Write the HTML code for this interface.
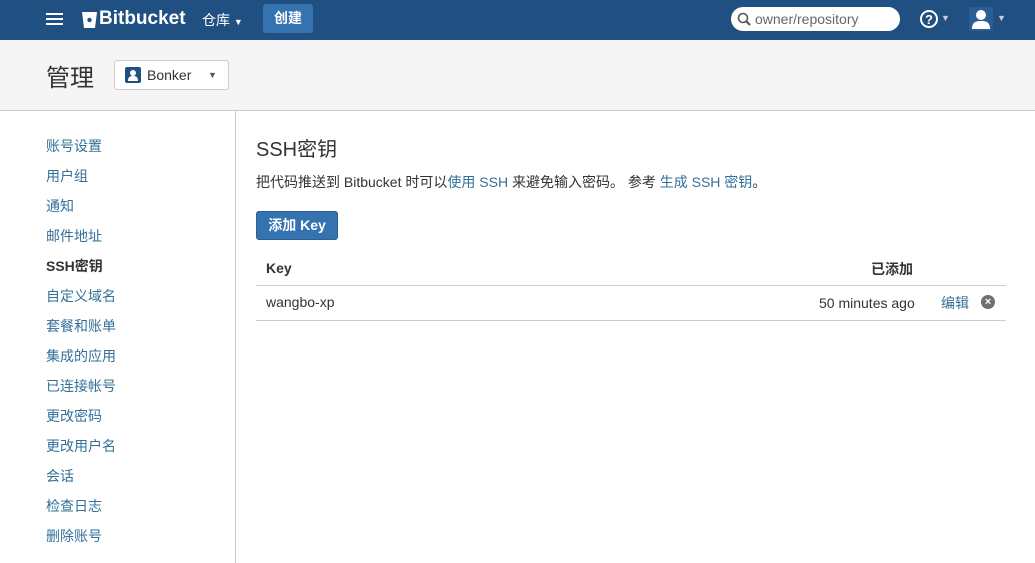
<!DOCTYPE html>
<html><head><meta charset="utf-8"><style>
*{margin:0;padding:0;box-sizing:border-box}
body{width:1035px;height:563px;overflow:hidden;background:#fff;font-family:"Liberation Sans","Noto Sans CJK SC",sans-serif;font-size:14px;color:#333;position:relative}
.top{position:absolute;left:0;top:0;width:1035px;height:40px;background:#205081}
.a{position:absolute}
.hdr{position:absolute;left:0;top:40px;width:1035px;height:71px;background:#f5f5f5;border-bottom:1px solid #ccc}
.side{position:absolute;left:0;top:111px;width:236px;height:452px;border-right:1px solid #ccc}
.side div{position:absolute;left:46px;font-size:14px;color:#32709a}
a{color:#32709a;text-decoration:none}
</style></head><body>
<div class="top">
 <div class="a" style="left:46px;top:13px;width:17px;height:2px;background:#fff;box-shadow:0 5px 0 #fff,0 10px 0 #fff"></div>
 <svg class="a" style="left:82px;top:11px" width="15" height="18" viewBox="0 0 15 18"><path d="M0 1h15l-2 16H2z" fill="#fff"/><circle cx="7.5" cy="9" r="2.2" fill="#205081"/></svg>
 <div class="a" style="left:99px;top:8px;color:#fff;font-weight:bold;font-size:19px">Bitbucket</div>
 <div class="a" style="left:202px;top:10px;color:#fff;font-size:14px">仓库 <span style="font-size:9px">▼</span></div>
 <div class="a" style="left:263px;top:4px;width:50px;height:29px;background:#3572b0;border-radius:3px;color:#fff;font-weight:bold;font-size:14px;text-align:center;line-height:28px">创建</div>
 <div class="a" style="left:731px;top:7px;width:169px;height:24px;background:#fff;border-radius:12px;color:#666;font-size:14px;padding-left:24px;line-height:24px">owner/repository</div>
 <svg class="a" style="left:737px;top:12px" width="14" height="14"><circle cx="6" cy="6" r="4.5" stroke="#555" stroke-width="1.6" fill="none"/><path d="M9 9l4 4" stroke="#555" stroke-width="2"/></svg>
 <div class="a" style="left:920px;top:10px;width:18px;height:18px;border:2px solid #fff;border-radius:50%;color:#fff;font-weight:bold;font-size:13px;text-align:center;line-height:15px">?</div>
 <div class="a" style="left:941px;top:13px;color:#ccd;font-size:9px">▼</div>
 <div class="a" style="left:969px;top:7px;width:24px;height:24px;background:#2a5d93"></div>
 <svg class="a" style="left:971px;top:9px" width="20" height="20"><circle cx="10" cy="6" r="5" fill="#fff"/><path d="M1 20c0-7 4-8 9-8s9 1 9 8z" fill="#fff"/></svg>
 <div class="a" style="left:997px;top:13px;color:#ccd;font-size:9px">▼</div>
</div>
<div class="hdr">
 <div class="a" style="left:46px;top:18px;font-size:24px;color:#333">管理</div>
 <div class="a" style="left:114px;top:20px;width:115px;height:30px;background:#fff;border:1px solid #ccc;border-radius:3px"></div>
 <div class="a" style="left:125px;top:27px;width:16px;height:16px;background:#205081;border-radius:2px"></div>
 <svg class="a" style="left:127px;top:29px" width="12" height="12"><circle cx="6" cy="4" r="3" fill="#fff"/><path d="M1 12c0-4 2-5 5-5s5 1 5 5z" fill="#fff"/></svg>
 <div class="a" style="left:147px;top:27px;font-size:14px;color:#333">Bonker</div>
 <div class="a" style="left:208px;top:30px;font-size:9px;color:#555">▼</div>
</div>
<div class="side">
 <div style="top:25px">账号设置</div><div style="top:55px">用户组</div><div style="top:85px">通知</div><div style="top:115px">邮件地址</div>
 <div style="top:145px;color:#333;font-weight:bold">SSH密钥</div>
 <div style="top:175px">自定义域名</div><div style="top:205px">套餐和账单</div><div style="top:235px">集成的应用</div><div style="top:265px">已连接帐号</div><div style="top:295px">更改密码</div><div style="top:325px">更改用户名</div><div style="top:355px">会话</div><div style="top:385px">检查日志</div><div style="top:415px">删除账号</div>
</div>
<div class="a" style="left:256px;top:133px;font-size:20px;color:#333">SSH密钥</div>
<div class="a" style="left:256px;top:172px;font-size:14px">把代码推送到 Bitbucket 时可以<a>使用 SSH</a> 来避免输入密码。 参考 <a>生成 SSH 密钥</a>。</div>
<div class="a" style="left:256px;top:211px;width:82px;height:29px;background:#3572b0;border:1px solid #2d5f95;border-radius:3px;color:#fff;font-weight:bold;font-size:14px;text-align:center;line-height:27px">添加 Key</div>
<div class="a" style="left:266px;top:260px;font-weight:bold;font-size:14px">Key</div>
<div class="a" style="left:871px;top:259px;font-weight:bold;font-size:14px">已添加</div>
<div class="a" style="left:256px;top:285px;width:750px;height:1px;background:#ccc"></div>
<div class="a" style="left:266px;top:294px;font-size:14px">wangbo-xp</div>
<div class="a" style="left:819px;top:295px;font-size:14px">50 minutes ago</div>
<div class="a" style="left:941px;top:293px;font-size:14px;color:#32709a">编辑</div>
<div class="a" style="left:981px;top:295px;width:14px;height:14px;border-radius:50%;background:#707070;color:#fff;font-size:11px;font-weight:bold;text-align:center;line-height:14px">×</div>
<div class="a" style="left:256px;top:320px;width:750px;height:1px;background:#ccc"></div>
</body></html>
